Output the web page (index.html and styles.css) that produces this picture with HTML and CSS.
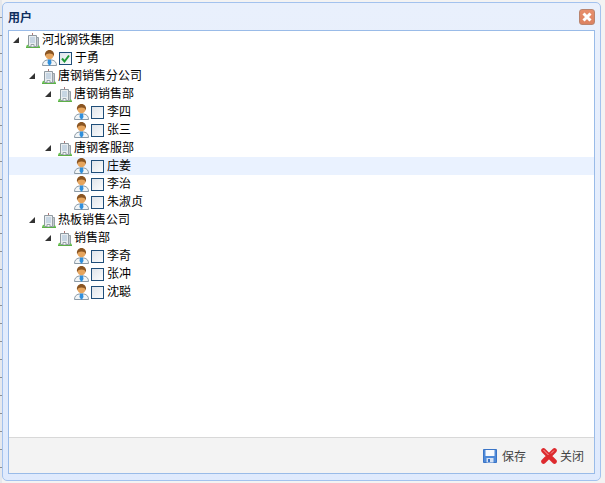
FILE: index.html
```html
<!DOCTYPE html>
<html lang="zh">
<head>
<meta charset="utf-8">
<title>用户</title>
<link rel="stylesheet" href="styles.css">
</head>
<body>
<svg class="defs" width="0" height="0" aria-hidden="true">
  <defs>
    <symbol id="org" viewBox="0 0 16 16">
      <path d="M6.500 1v3" stroke="#b07a78" stroke-width="1"/>
      <path d="M2.500 3.500h8v11h-8z" fill="#e9edf0" stroke="#8f99a0"/>
      <path d="M10.500 5.500h2v9h-2z" fill="#c3cace" stroke="#98a1a8"/>
      <path d="M4 6h5M4 8h5M4 10h5" stroke="#a5bed6" stroke-width="1"/>
      <path d="M5 12.500h3v2.500h-3z" fill="#f7f9fa" stroke="#98a2a9"/>
      <path d="M0 16c.2-2.600 1-3.500 2.500-3v3zM12 13.500c1-.5 2 .5 2 2.500h-2z" fill="#6cc456"/>
      <path d="M0 15.500h14" stroke="#5cb048"/>
    </symbol>
    <symbol id="user" viewBox="0 0 16 16">
      <path d="M.5 15.500c0-3.200 1.500-4.800 4.500-5.500h5c3 .7 4.500 2.300 4.500 5.500z" fill="#f2f5f7" stroke="#8b9aa6"/>
      <path d="M6 9.500h3l.5 3.500-1.500 2.500h-1l-1.500-2.500z" fill="#2f8fdc"/>
      <circle cx="7.500" cy="5" r="4.200" fill="#e6a55e"/>
      <path d="M3.200 6.500c-1.200-4 1.600-6.500 4.300-6.500s5.500 2.500 4.300 6.500c-.3-2-1.500-3-4.300-3s-4 1-4.300 3z" fill="#8a5522"/>
    </symbol>
  </defs>
</svg>
<div class="window">
  <header class="titlebar">
    <span class="title">用户</span>
    <span class="close-btn"><svg viewBox="0 0 10 10" width="10" height="10"><path d="M1.500 1.500l7 7M8.500 1.500l-7 7" stroke="#fff" stroke-width="3"/></svg></span>
  </header>
  <div class="panel">
    <ul class="tree">
      <li class="row d0"><i class="arrow"></i><svg class="icon"><use href="#org"/></svg><span class="label">河北钢铁集团</span></li>
      <li class="row d1"><i class="leaf"></i><svg class="icon"><use href="#user"/></svg><span class="check on"><svg viewBox="0 0 11 11" width="11" height="11"><path d="M2 5.500l2.500 3 4.500-6" fill="none" stroke="#1f9a35" stroke-width="2"/></svg></span><span class="label">于勇</span></li>
      <li class="row d1"><i class="arrow"></i><svg class="icon"><use href="#org"/></svg><span class="label">唐钢销售分公司</span></li>
      <li class="row d2"><i class="arrow"></i><svg class="icon"><use href="#org"/></svg><span class="label">唐钢销售部</span></li>
      <li class="row d3"><i class="leaf"></i><svg class="icon"><use href="#user"/></svg><span class="check"></span><span class="label">李四</span></li>
      <li class="row d3"><i class="leaf"></i><svg class="icon"><use href="#user"/></svg><span class="check"></span><span class="label">张三</span></li>
      <li class="row d2"><i class="arrow"></i><svg class="icon"><use href="#org"/></svg><span class="label">唐钢客服部</span></li>
      <li class="row d3 hover"><i class="leaf"></i><svg class="icon"><use href="#user"/></svg><span class="check"></span><span class="label">庄姜</span></li>
      <li class="row d3"><i class="leaf"></i><svg class="icon"><use href="#user"/></svg><span class="check"></span><span class="label">李治</span></li>
      <li class="row d3"><i class="leaf"></i><svg class="icon"><use href="#user"/></svg><span class="check"></span><span class="label">朱淑贞</span></li>
      <li class="row d1"><i class="arrow"></i><svg class="icon"><use href="#org"/></svg><span class="label">热板销售公司</span></li>
      <li class="row d2"><i class="arrow"></i><svg class="icon"><use href="#org"/></svg><span class="label">销售部</span></li>
      <li class="row d3"><i class="leaf"></i><svg class="icon"><use href="#user"/></svg><span class="check"></span><span class="label">李奇</span></li>
      <li class="row d3"><i class="leaf"></i><svg class="icon"><use href="#user"/></svg><span class="check"></span><span class="label">张冲</span></li>
      <li class="row d3"><i class="leaf"></i><svg class="icon"><use href="#user"/></svg><span class="check"></span><span class="label">沈聪</span></li>
    </ul>
    <footer class="toolbar">
      <span class="tool save">
        <svg viewBox="0 0 14 14" width="14" height="14"><path d="M.5.500h13v13h-13z" fill="#4f8ad8" stroke="#3a74c6"/><path d="M2.500 1h9v6h-9z" fill="#f6f9fd"/><path d="M3.500 9h7v4.500h-7z" fill="#d6e2f4"/><path d="M5 10h2v3h-2z" fill="#3a74c6"/></svg>
        <span>保存</span>
      </span>
      <span class="tool">
        <svg viewBox="0 0 16 16" width="16" height="16"><path d="M2.500 2.500l11 11M13.500 2.500l-11 11" stroke="#dd2a2e" stroke-width="4.600" stroke-linecap="round"/><path d="M2.500 2l5 5M13 2.500l-3 3" stroke="#f6a3a3" stroke-width="1"/></svg>
        <span>关闭</span>
      </span>
    </footer>
  </div>
</div>
</body>
</html>
```
FILE: styles.css
```css
* { box-sizing: border-box; }
html, body { margin: 0; height: 100%; }
body {
  background:
    repeating-linear-gradient(#e6e8ec 0 17px, #8d9094 17px 18px) left top / 2px 100% no-repeat,
    #f3f3f3;
  font-family: "Liberation Sans", "Noto Sans CJK SC", sans-serif;
  font-size: 12px;
  color: #000;
  padding: 2px 0 0 2px;
  overflow: hidden;
}
.defs { position: absolute; }
.window {
  width: 599px;
  height: 479px;
  background: linear-gradient(#e9f0fc, #dfeafd);
  border: 1px solid #a3c2ee;
  border-radius: 5px;
  padding: 0 5px 6px 5px;
  display: flex;
  flex-direction: column;
}
.titlebar {
  height: 27px;
  flex: none;
  display: flex;
  align-items: center;
  justify-content: space-between;
}
.title { font-weight: bold; color: #0f2e5e; font-size: 12px; }
.close-btn {
  width: 16px;
  height: 16px;
  background: linear-gradient(#e78f6c, #dc8260);
  border: 1px solid #b9846e;
  border-radius: 3px;
  display: flex;
  align-items: center;
  justify-content: center;
}
.panel {
  flex: 1;
  min-height: 0;
  border: 1px solid #99bbe8;
  background: #fff;
  display: flex;
  flex-direction: column;
}
.tree {
  list-style: none;
  margin: 0;
  padding: 0;
  flex: 1;
}
.row {
  height: 18px;
  display: flex;
  align-items: center;
}
.d0 { padding-left: 1px; }
.d1 { padding-left: 17px; }
.d2 { padding-left: 33px; }
.d3 { padding-left: 49px; }
.hover { background: #eaf2ff; }
.arrow, .leaf { width: 16px; height: 16px; flex: none; position: relative; }
.arrow::after {
  content: "";
  position: absolute;
  left: 3px;
  top: 5px;
  border-style: solid;
  border-width: 0 0 6px 6px;
  border-color: transparent transparent #333 transparent;
}
.icon { width: 16px; height: 16px; flex: none; }
.check {
  width: 13px;
  height: 13px;
  flex: none;
  margin-left: 1px;
  margin-right: 3px;
  border: 1px solid #1f4e79;
  background: linear-gradient(135deg, #dfe4ea, #fbfcfd);
  display: flex;
  align-items: center;
  justify-content: center;
}
.label { white-space: nowrap; line-height: 18px; }
.toolbar {
  height: 36px;
  flex: none;
  background: #f3f3f3;
  border-top: 1px solid #d8d8d8;
  display: flex;
  align-items: center;
  justify-content: flex-end;
  gap: 15px;
  padding-right: 10px;
}
.tool { display: flex; align-items: center; gap: 3px; color: #444; }
.save { gap: 5px; }
```
